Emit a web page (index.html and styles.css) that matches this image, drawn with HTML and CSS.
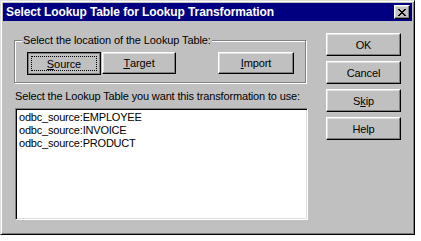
FILE: index.html
```html
<!DOCTYPE html>
<html>
<head>
<meta charset="utf-8">
<link rel="stylesheet" href="styles.css">
</head>
<body>
<div class="window">
  <div class="titlebar">
    <span class="title">Select Lookup Table for Lookup Transformation</span>
    <button class="close" aria-label="Close">
      <svg width="8" height="7" viewBox="0 0 8 7"><path d="M0 0h2v1h1v1h2V1h1V0h2v1H7v1H6v1H5v1h1v1h1v1h1v1H6V6H5V5H3v1H2v1H0V6h1V5h1V4h1V3H2V2H1V1H0z" fill="#000"/></svg>
    </button>
  </div>
  <div class="body">
    <div class="main">
      <fieldset class="group">
        <legend class="group-label">Select the location of the Lookup Table:</legend>
        <div class="group-row">
          <button class="btn btn-pressed"><span class="focus"><u>S</u>ource</span></button>
          <button class="btn btn-target"><u>T</u>arget</button>
          <button class="btn btn-import"><u>I</u>mport</button>
        </div>
      </fieldset>
      <div class="label">Select the Lookup Table you want this transformation to use:</div>
      <div class="listbox">
        <div class="item">odbc_source:EMPLOYEE</div>
        <div class="item">odbc_source:INVOICE</div>
        <div class="item">odbc_source:PRODUCT</div>
      </div>
    </div>
    <div class="side">
      <button class="btn btn-side">OK</button>
      <button class="btn btn-side">Cancel</button>
      <button class="btn btn-side">S<u>k</u>ip</button>
      <button class="btn btn-side">Help</button>
    </div>
  </div>
</div>
</body>
</html>
```
FILE: styles.css
```css
html, body {
  margin: 0;
  padding: 0;
  background: #fff;
}
body {
  font-family: "Liberation Sans", Arial, sans-serif;
  font-size: 11px;
  color: #000;
}
.window {
  width: 415px;
  height: 235px;
  box-sizing: border-box;
  background: #c0c0c0;
  border: 1px solid;
  border-color: #dfdfdf #000 #000 #dfdfdf;
  box-shadow: inset 1px 1px #fff, inset -1px -1px #808080;
  padding: 2px;
  display: flex;
  flex-direction: column;
}
.titlebar {
  height: 18px;
  flex: none;
  background: #000080;
  display: flex;
  align-items: center;
  padding: 0 2px 0 3px;
}
.title {
  flex: 1;
  color: #fff;
  font-weight: bold;
  font-size: 12px;
  line-height: 18px;
  white-space: nowrap;
  letter-spacing: -0.1px;
}
.close {
  width: 16px;
  height: 14px;
  padding: 0;
  margin: 0;
  background: #c0c0c0;
  border: 1px solid;
  border-color: #fff #000 #000 #fff;
  box-shadow: inset -1px -1px #808080, inset 1px 1px #dfdfdf;
  display: flex;
  align-items: center;
  justify-content: center;
}
.body {
  flex: 1;
  display: flex;
}
.main {
  width: 293px;
  padding: 13px 0 0 12px;
  display: flex;
  flex-direction: column;
}
.group {
  margin: 0 0 0 -1px;
  width: 292px;
  box-sizing: border-box;
  border: 1px solid #808080;
  box-shadow: inset 1px 1px #fff, 1px 1px #fff;
  padding: 5px 7px 7px 7px;
}
.group-label {
  padding: 0 1px;
  background: #c0c0c0;
  line-height: 13px;
  letter-spacing: -0.1px;
}
.group-row {
  display: flex;
  margin-left: 5px;
}
.btn {
  font-family: "Liberation Sans", Arial, sans-serif;
  font-size: 11px;
  color: #000;
  background: #c0c0c0;
  height: 23px;
  padding: 0;
  margin: 0;
  border: 1px solid;
  border-color: #fff #000 #000 #fff;
  box-shadow: inset -1px -1px #808080, inset 1px 1px #dfdfdf;
  box-sizing: border-box;
  display: flex;
  align-items: center;
  justify-content: center;
  letter-spacing: -0.1px;
}
.btn-pressed {
  width: 74px;
  border-color: #000;
  box-shadow: inset 0 0 0 1px #808080;
  padding: 4px;
}
.focus {
  flex: 1;
  align-self: stretch;
  outline: 1px dotted #000;
  display: flex;
  align-items: center;
  justify-content: center;
  padding-top: 1px;
}
.btn-target {
  width: 74px;
  margin-left: 1px;
  height: 22px;
}
.btn-import {
  width: 76px;
  margin-left: 42px;
  height: 22px;
}
.label {
  margin-top: 7px;
  line-height: 13px;
  white-space: nowrap;
  letter-spacing: -0.15px;
}
.listbox {
  margin-top: 5px;
  height: 112px;
  box-sizing: border-box;
  background: #fff;
  border: 1px solid;
  border-color: #808080 #fff #fff #808080;
  box-shadow: inset 1px 1px #000, inset -1px -1px #dfdfdf;
  padding: 2px 3px;
}
.item {
  line-height: 13px;
  white-space: nowrap;
  letter-spacing: -0.2px;
}
.side {
  margin-left: 18px;
  padding-top: 12px;
  display: flex;
  flex-direction: column;
  gap: 5px;
}
.btn-side {
  width: 75px;
}
u {
  text-decoration-thickness: 1px;
  text-underline-offset: 1px;
}
```
